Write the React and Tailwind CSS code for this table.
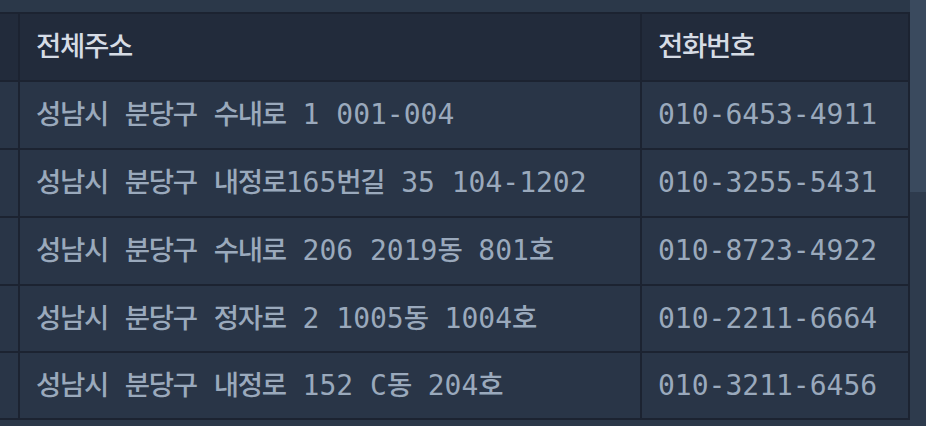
import React from "react";

const rows = [
  { addr: "성남시 분당구 수내로 1 001-004", phone: "010-6453-4911", h: "h-[66px]" },
  { addr: "성남시 분당구 내정로165번길 35 104-1202", phone: "010-3255-5431", h: "h-[66px]" },
  { addr: "성남시 분당구 수내로 206 2019동 801호", phone: "010-8723-4922", h: "h-[66px]" },
  { addr: "성남시 분당구 정자로 2 1005동 1004호", phone: "010-2211-6664", h: "h-[65px]" },
  { addr: "성남시 분당구 내정로 152 C동 204호", phone: "010-3211-6456", h: "h-[65px]" },
];

// hangul runs get their own size so they keep the width of the original
const Mixed = ({ text }) => {
  const parts = text.split(/([\uAC00-\uD7A3]+)/).filter(Boolean);
  return (
    <>
      {parts.map((p, i) =>
        /[\uAC00-\uD7A3]/.test(p) ? (
          <span key={i} className="text-[27.5px] tracking-[-1.3px] font-medium">
            {p}
          </span>
        ) : (
          <span key={i}>{p}</span>
        )
      )}
    </>
  );
};

const App = () => {
  return (
    <div
      className="w-[926px] h-[426px] overflow-hidden flex bg-[#2b3849]"
      style={{ fontFamily: '"DejaVu Sans Mono", "Noto Sans CJK KR", monospace' }}
    >
      <div className="w-[910px] pt-[12px]">
        <div className="grid grid-cols-[18px_620px_266px] gap-[2px] bg-[#1c2331] pt-[2px] pr-[2px] pb-[2px] whitespace-pre text-[28px]">
          <div className="h-[66px] bg-[#222b3b]" />
          <div className="h-[66px] bg-[#222b3b] pl-[16px] flex items-center text-[#d6dce5]">
            <Mixed text="전체주소" />
          </div>
          <div className="h-[66px] bg-[#222b3b] pl-[16px] flex items-center text-[#d6dce5]">
            <Mixed text="전화번호" />
          </div>
          {rows.map((r, i) => (
            <React.Fragment key={i}>
              <div className={`${r.h} bg-[#293547]`} />
              <div className={`${r.h} bg-[#293547] pl-[16px] flex items-center text-[#9aa9bc]`}>
                <Mixed text={r.addr} />
              </div>
              <div className={`${r.h} bg-[#293547] pl-[16px] flex items-center text-[#9aa9bc]`}>
                <Mixed text={r.phone} />
              </div>
            </React.Fragment>
          ))}
        </div>
      </div>
      <div className="w-[16px] flex flex-col">
        <div className="h-[192px] bg-[#3a4a5e]" />
        <div className="flex-1 bg-[#2e3b4d]" />
      </div>
    </div>
  );
};

export default App;
